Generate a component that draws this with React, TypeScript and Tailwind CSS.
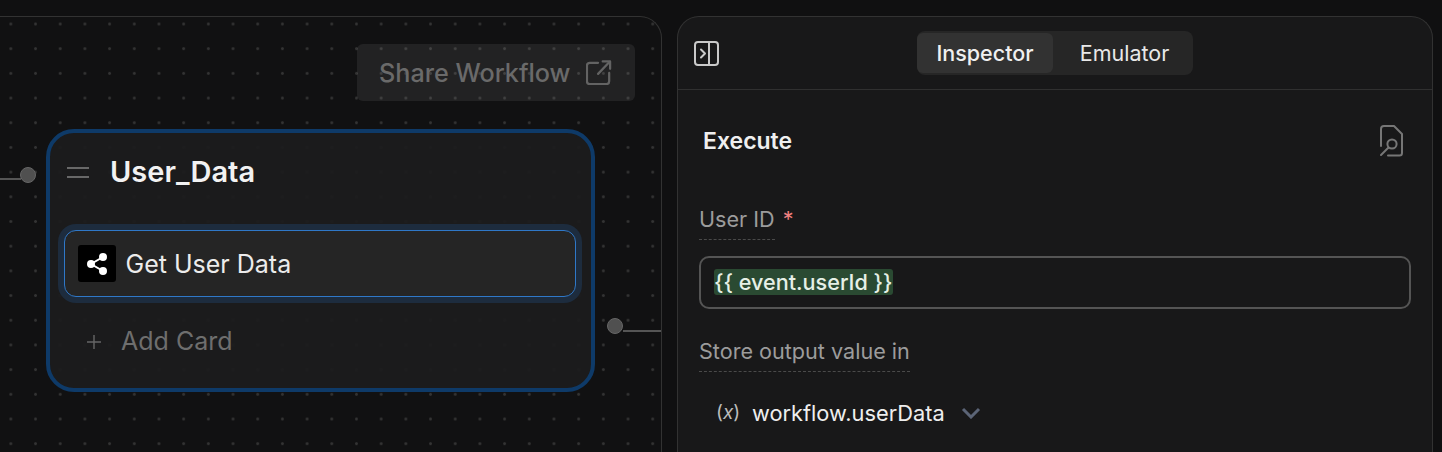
import React from "react";

const font = { fontFamily: "Inter, 'Noto Sans', sans-serif" };

function PanelIcon() {
  return (
    <svg width="25" height="25" viewBox="0 0 25 25" fill="none" stroke="#c9c9c9" strokeWidth="2" strokeLinecap="round" strokeLinejoin="round">
      <rect x="1" y="1" width="23" height="23" rx="3" />
      <path d="M15 1v23" />
      <path d="M7 8.5l4 4-4 4" />
    </svg>
  );
}

function ExternalIcon() {
  return (
    <svg width="26" height="25" viewBox="0 0 28 27" fill="none" stroke="#636363" strokeWidth="2.4" strokeLinecap="round" strokeLinejoin="round">
      <path d="M13 3H4a3 3 0 0 0-3 3v17a3 3 0 0 0 3 3h18a3 3 0 0 0 3-3v-9" />
      <path d="M13 15L25.5 2" />
      <path d="M18 1.5h8v8" />
    </svg>
  );
}

function FileSearchIcon() {
  return (
    <svg width="26" height="32" viewBox="0 0 26 32" fill="none" stroke="#767676" strokeWidth="2" strokeLinecap="round" strokeLinejoin="round">
      <path d="M3 21V4a3 3 0 0 1 3-3h10l8 8v19a2.5 2.5 0 0 1-2.5 2.5H10" />
      <circle cx="14" cy="19" r="4.6" />
      <path d="M10.5 22.5L3 30" />
    </svg>
  );
}

function ShareGlyph() {
  return (
    <svg width="24" height="24" viewBox="0 0 24 24" fill="#fff" stroke="#fff" strokeWidth="2">
      <path d="M18 5L6 12l12 7" fill="none" />
      <circle cx="18" cy="5" r="3" />
      <circle cx="6" cy="12" r="3" />
      <circle cx="18" cy="19" r="3" />
    </svg>
  );
}

function PlusIcon() {
  return (
    <svg width="16" height="16" viewBox="0 0 16 16" fill="none" stroke="#666" strokeWidth="1.4">
      <path d="M8 1v14M1 8h14" />
    </svg>
  );
}

function Chevron() {
  return (
    <svg width="20" height="12" viewBox="0 0 20 12" fill="none" stroke="#5b6476" strokeWidth="3">
      <path d="M2 2l8 8 8-8" />
    </svg>
  );
}

function Field({ children }: { children: React.ReactNode }) {
  return (
    <div className="inline-block border-b border-dashed border-[#4a4a4a] pb-[6px] text-[21.6px] leading-[27px] text-[#9c9c9c]">
      {children}
    </div>
  );
}

export default function App() {
  return (
    <div style={font} className="flex h-[452px] w-[1442px] overflow-hidden bg-[#101011] pt-4">
      <div className="relative ml-[-20px] h-[440px] w-[682px] shrink-0 rounded-tr-[22px] border-t border-r border-[#323232] bg-[#111112] bg-[radial-gradient(circle,#333333_1.2px,transparent_1.6px)] bg-[size:24.7px_24.7px] bg-[position:18.5px_-5.35px]">
        <div className="absolute left-[377px] top-[27px] flex h-[57px] w-[278px] items-center justify-between rounded-[6px] bg-white/[0.07] pl-[22px] pr-[23px]">
          <span className="pt-[2px] text-[25.2px] font-medium text-[#6a6a6a]">Share Workflow</span>
          <ExternalIcon />
        </div>

        <div className="absolute left-[40px] top-[150px] h-[16px] w-[16px] rounded-full border border-[#666] bg-[#505050]" />
        <div className="absolute left-0 top-[161px] h-[1.5px] w-[41px] bg-[#555]" />
        <div className="absolute left-[627px] top-[301px] h-[16px] w-[16px] rounded-full border border-[#666] bg-[#505050]" />
        <div className="absolute left-[643px] top-[313px] h-[1.5px] w-[38px] bg-[#555]" />

        <div className="absolute left-[66px] top-[112px] h-[263px] w-[549px] rounded-[28px] border-4 border-[#0e3a68] bg-[#1c1c1d]/95">
          <div className="flex h-[78px] items-center pl-[17px]">
            <div className="flex w-[22px] flex-col gap-[7px]">
              <div className="h-[2px] bg-[#686868]" />
              <div className="h-[2px] bg-[#686868]" />
            </div>
            <span className="ml-[21px] text-[29px] font-semibold text-[#f2f2f2]">User_Data</span>
          </div>
          <div className="ml-[14px] mr-[15.5px] mt-[19px] flex h-[67px] items-center rounded-[12px] border-[1.5px] border-[#2f78c8] bg-[#252525] pl-[12.5px] shadow-[0_0_0_6px_#1d2c3e]">
            <div className="flex h-[37px] w-[38px] items-center justify-center rounded-[3px] bg-black">
              <ShareGlyph />
            </div>
            <span className="ml-[10px] pt-[3px] text-[25px] text-[#ececec]">Get User Data</span>
          </div>
          <div className="flex h-[88px] items-center pl-[36px] pt-[1px]">
            <PlusIcon />
            <span className="ml-[19px] text-[25px] text-[#6e6e6e]">Add Card</span>
          </div>
        </div>
      </div>

      <div className="ml-[15px] h-[440px] w-[756px] shrink-0 rounded-t-[22px] border-x border-t border-[#323232] bg-[#181819]">
        <div className="grid h-[73px] grid-cols-[1fr_auto_1fr] items-center border-b border-[#303030] px-[16px]">
          <PanelIcon />
          <div className="flex h-[44px] items-center rounded-[8px] bg-[#262626] pr-[2px]">
            <div className="flex h-[40px] w-[136px] items-center justify-center rounded-[6px] bg-[#323232] text-[21.5px] font-medium text-[#f0f0f0]">Inspector</div>
            <div className="flex h-[40px] w-[138px] items-center justify-center pl-[5px] text-[21.5px] text-[#e8e8e8]">Emulator</div>
          </div>
          <div />
        </div>
        <div className="px-[21px]">
          <div className="flex items-center justify-between pl-[4px] pr-[7px] pt-[34px]">
            <span className="text-[23px] font-semibold text-[#efefef]">Execute</span>
            <FileSearchIcon />
          </div>
          <div className="mt-[47px] flex items-start gap-[8px]">
            <Field>User ID</Field>
            <span className="text-[21.6px] leading-[27px] text-[#f08080]">*</span>
          </div>
          <div className="mt-[16px] flex h-[53px] w-[712px] items-center rounded-[10px] border-2 border-[#545454] pl-[13px]">
            <span className="flex h-[26px] items-center rounded-[3px] bg-[#2a4a32] text-[21.6px] font-medium text-[#e6f0e6]">{"{{ event.userId }}"}</span>
          </div>
          <div className="mt-[29px]">
            <Field>Store output value in</Field>
          </div>
          <div className="mt-[25px] flex items-center pl-[17px]">
            <span className="w-[23px] text-[19px] text-[#bcbcbc]">(<i>x</i>)</span>
            <span className="ml-[13px] text-[21.8px] font-normal text-[#eeeeee]">workflow.userData</span>
            <span className="ml-[16px]"><Chevron /></span>
          </div>
        </div>
      </div>
    </div>
  );
}
